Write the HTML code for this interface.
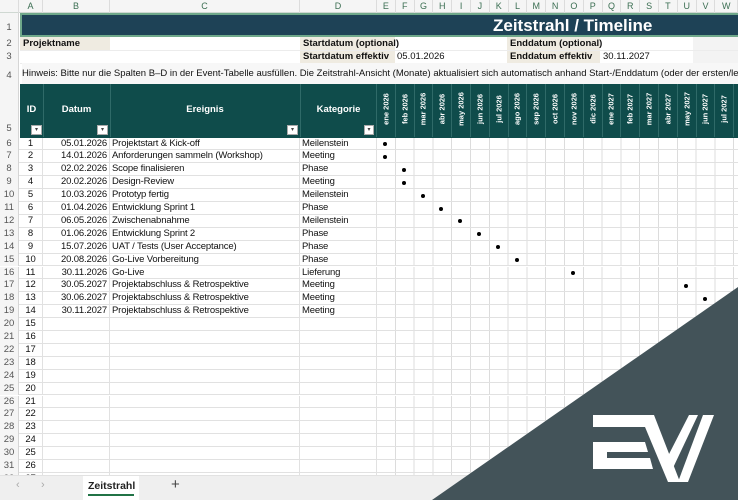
<!DOCTYPE html>
<html><head><meta charset="utf-8"><style>
*{margin:0;padding:0;box-sizing:border-box}
body{width:738px;height:500px;overflow:hidden;background:#fff;font-family:"Liberation Sans",sans-serif;position:relative;color:#111}
.a{position:absolute;white-space:nowrap}
.colh{top:0;height:13px;background:#f5f5f5;border-bottom:1px solid #cfd8d2;left:0;width:738px}
.cl{position:absolute;top:0;height:13px;font-size:9px;color:#3b6e52;text-align:center;line-height:13px;border-right:1px solid #dcdcdc}
.rn{position:absolute;left:0;width:19px;font-size:9.5px;color:#555;text-align:center;background:#f5f5f5;border-right:1px solid #d5d5d5}
.row{position:absolute;left:19px;width:719px;height:12.9px;border-bottom:1px solid #e1e1e1;font-size:9.5px;line-height:12.9px;letter-spacing:-0.15px;
background:repeating-linear-gradient(90deg,transparent 0,transparent 17.8px,#dcdcdc 17.8px,#dcdcdc 18.8px) 358px 0/100% 100% no-repeat;}
.c{position:absolute;top:0;height:100%;border-right:1px solid #e1e1e1;overflow:hidden}
.cA{left:0;width:24px;text-align:center}
.cB{left:24px;width:67px;text-align:right;padding-right:2px}
.cC{left:91px;width:190px;padding-left:2px}
.cD{left:281px;width:77px;padding-left:2px}
.dot{position:absolute;top:4.5px;width:4px;height:4px;border-radius:50%;background:#000}
.mh{position:absolute;top:84px;height:53px;width:18.8px;border-right:1px solid #2f6a68}
.mh span{position:absolute;left:50%;top:25px;transform:translate(-50%,-50%) rotate(-90deg);color:#fff;font-size:7.5px;font-weight:bold;white-space:nowrap}
.fb{position:absolute;top:125px;width:11px;height:10px;background:#fff;border:1px solid #aaa;font-size:6px;line-height:8px;text-align:center;color:#444}
.lab{background:#efebe1;font-weight:bold;font-size:9.5px;padding-left:3px;height:13px;line-height:13px}
</style></head><body>
<div class="a colh"></div>
<div class="cl" style="left:0;width:19px"></div>
<div class="cl" style="left:19px;width:24px">A</div>
<div class="cl" style="left:43px;width:67px">B</div>
<div class="cl" style="left:110px;width:190px">C</div>
<div class="cl" style="left:300px;width:77px">D</div>
<div class="cl" style="left:377px;width:18.8px">E</div><div class="cl" style="left:395.8px;width:18.8px">F</div><div class="cl" style="left:414.6px;width:18.8px">G</div><div class="cl" style="left:433.4px;width:18.8px">H</div><div class="cl" style="left:452.2px;width:18.8px">I</div><div class="cl" style="left:471px;width:18.8px">J</div><div class="cl" style="left:489.8px;width:18.8px">K</div><div class="cl" style="left:508.6px;width:18.8px">L</div><div class="cl" style="left:527.4px;width:18.8px">M</div><div class="cl" style="left:546.2px;width:18.8px">N</div><div class="cl" style="left:565px;width:18.8px">O</div><div class="cl" style="left:583.8px;width:18.8px">P</div><div class="cl" style="left:602.6px;width:18.8px">Q</div><div class="cl" style="left:621.4px;width:18.8px">R</div><div class="cl" style="left:640.2px;width:18.8px">S</div><div class="cl" style="left:659px;width:18.8px">T</div><div class="cl" style="left:677.8px;width:18.8px">U</div><div class="cl" style="left:696.6px;width:18.8px">V</div><div class="cl" style="left:715.4px;width:22.6px">W</div>

<div class="rn" style="top:13px;height:24px;line-height:30px">1</div>
<div class="rn" style="top:37px;height:13px;line-height:13px">2</div>
<div class="rn" style="top:50px;height:13px;line-height:13px">3</div>
<div class="rn" style="top:63px;height:21px;line-height:26px">4</div>
<div class="rn" style="top:84px;height:53.5px;line-height:90px">5</div>

<div class="a" style="left:20px;top:13px;width:718px;height:24px;background:#1e4256;border:2px solid #6fa88a;border-right:none"></div>
<div class="a" style="left:493px;top:13px;height:24px;line-height:25px;color:#fff;font-weight:bold;font-size:17px">Zeitstrahl / Timeline</div>

<div class="a lab" style="left:20px;top:37px;width:90px">Projektname</div>
<div class="a lab" style="left:300px;top:37px;width:95px">Startdatum (optional)</div>
<div class="a lab" style="left:507px;top:37px;width:93px">Enddatum (optional)</div>
<div class="a lab" style="left:300px;top:50px;width:95px">Startdatum effektiv</div>
<div class="a lab" style="left:507px;top:50px;width:93px">Enddatum effektiv</div>
<div class="a" style="left:397px;top:50px;font-size:9.5px;line-height:13px">05.01.2026</div>
<div class="a" style="left:603px;top:50px;font-size:9.5px;line-height:13px">30.11.2027</div>
<div class="a" style="left:693px;top:37px;width:45px;height:26px;background:#f3f3f3"></div>
<div class="a" style="left:20px;top:49.5px;width:718px;border-top:1px solid #ececec"></div>
<div class="a" style="left:20px;top:62.5px;width:718px;border-top:1px solid #ececec"></div>

<div class="a" style="left:22px;top:63px;height:21px;line-height:21px;font-size:9.5px;background:#f7f7f7;width:716px">Hinweis: Bitte nur die Spalten B–D in der Event-Tabelle ausfüllen. Die Zeitstrahl-Ansicht (Monate) aktualisiert sich automatisch anhand Start-/Enddatum (oder der ersten/letzten</div>

<div class="a" style="left:20px;top:84px;width:718px;height:53.5px;background:#0f4c4b"></div>
<div class="a" style="left:43px;top:84px;height:53px;border-left:1px solid #2f6a68"></div>
<div class="a" style="left:110px;top:84px;height:53px;border-left:1px solid #2f6a68"></div>
<div class="a" style="left:300px;top:84px;height:53px;border-left:1px solid #2f6a68"></div>
<div class="a" style="left:376px;top:84px;height:53px;border-left:1px solid #2f6a68"></div>
<div class="a" style="left:20px;top:104px;width:23px;text-align:center;color:#fff;font-weight:bold;font-size:9.5px">ID</div>
<div class="a" style="left:43px;top:104px;width:67px;text-align:center;color:#fff;font-weight:bold;font-size:9.5px">Datum</div>
<div class="a" style="left:110px;top:104px;width:190px;text-align:center;color:#fff;font-weight:bold;font-size:9.5px">Ereignis</div>
<div class="a" style="left:300px;top:104px;width:77px;text-align:center;color:#fff;font-weight:bold;font-size:9.5px">Kategorie</div>
<div class="fb" style="left:31px">▾</div><div class="fb" style="left:97px">▾</div><div class="fb" style="left:287px">▾</div><div class="fb" style="left:364px;width:10px">▾</div>
<div class="mh" style="left:377px"><span>ene 2026</span></div><div class="mh" style="left:395.8px"><span>feb 2026</span></div><div class="mh" style="left:414.6px"><span>mar 2026</span></div><div class="mh" style="left:433.4px"><span>abr 2026</span></div><div class="mh" style="left:452.2px"><span>may 2026</span></div><div class="mh" style="left:471px"><span>jun 2026</span></div><div class="mh" style="left:489.8px"><span>jul 2026</span></div><div class="mh" style="left:508.6px"><span>ago 2026</span></div><div class="mh" style="left:527.4px"><span>sep 2026</span></div><div class="mh" style="left:546.2px"><span>oct 2026</span></div><div class="mh" style="left:565px"><span>nov 2026</span></div><div class="mh" style="left:583.8px"><span>dic 2026</span></div><div class="mh" style="left:602.6px"><span>ene 2027</span></div><div class="mh" style="left:621.4px"><span>feb 2027</span></div><div class="mh" style="left:640.2px"><span>mar 2027</span></div><div class="mh" style="left:659px"><span>abr 2027</span></div><div class="mh" style="left:677.8px"><span>may 2027</span></div><div class="mh" style="left:696.6px"><span>jun 2027</span></div><div class="mh" style="left:715.4px"><span>jul 2027</span></div>

<div class="rn" style="top:137.5px;height:12.9px;line-height:12.9px">6</div><div class="row" style="top:137.5px"><div class="c cA">1</div><div class="c cB">05.01.2026</div><div class="c cC">Projektstart &amp; Kick-off</div><div class="c cD">Meilenstein</div><div class="dot" style="left:364px"></div></div>
<div class="rn" style="top:150.4px;height:12.9px;line-height:12.9px">7</div><div class="row" style="top:150.4px"><div class="c cA">2</div><div class="c cB">14.01.2026</div><div class="c cC">Anforderungen sammeln (Workshop)</div><div class="c cD">Meeting</div><div class="dot" style="left:364px"></div></div>
<div class="rn" style="top:163.3px;height:12.9px;line-height:12.9px">8</div><div class="row" style="top:163.3px"><div class="c cA">3</div><div class="c cB">02.02.2026</div><div class="c cC">Scope finalisieren</div><div class="c cD">Phase</div><div class="dot" style="left:382.8px"></div></div>
<div class="rn" style="top:176.2px;height:12.9px;line-height:12.9px">9</div><div class="row" style="top:176.2px"><div class="c cA">4</div><div class="c cB">20.02.2026</div><div class="c cC">Design-Review</div><div class="c cD">Meeting</div><div class="dot" style="left:382.8px"></div></div>
<div class="rn" style="top:189.1px;height:12.9px;line-height:12.9px">10</div><div class="row" style="top:189.1px"><div class="c cA">5</div><div class="c cB">10.03.2026</div><div class="c cC">Prototyp fertig</div><div class="c cD">Meilenstein</div><div class="dot" style="left:401.6px"></div></div>
<div class="rn" style="top:202px;height:12.9px;line-height:12.9px">11</div><div class="row" style="top:202px"><div class="c cA">6</div><div class="c cB">01.04.2026</div><div class="c cC">Entwicklung Sprint 1</div><div class="c cD">Phase</div><div class="dot" style="left:420.4px"></div></div>
<div class="rn" style="top:214.9px;height:12.9px;line-height:12.9px">12</div><div class="row" style="top:214.9px"><div class="c cA">7</div><div class="c cB">06.05.2026</div><div class="c cC">Zwischenabnahme</div><div class="c cD">Meilenstein</div><div class="dot" style="left:439.2px"></div></div>
<div class="rn" style="top:227.8px;height:12.9px;line-height:12.9px">13</div><div class="row" style="top:227.8px"><div class="c cA">8</div><div class="c cB">01.06.2026</div><div class="c cC">Entwicklung Sprint 2</div><div class="c cD">Phase</div><div class="dot" style="left:458px"></div></div>
<div class="rn" style="top:240.7px;height:12.9px;line-height:12.9px">14</div><div class="row" style="top:240.7px"><div class="c cA">9</div><div class="c cB">15.07.2026</div><div class="c cC">UAT / Tests (User Acceptance)</div><div class="c cD">Phase</div><div class="dot" style="left:476.8px"></div></div>
<div class="rn" style="top:253.6px;height:12.9px;line-height:12.9px">15</div><div class="row" style="top:253.6px"><div class="c cA">10</div><div class="c cB">20.08.2026</div><div class="c cC">Go-Live Vorbereitung</div><div class="c cD">Phase</div><div class="dot" style="left:495.6px"></div></div>
<div class="rn" style="top:266.5px;height:12.9px;line-height:12.9px">16</div><div class="row" style="top:266.5px"><div class="c cA">11</div><div class="c cB">30.11.2026</div><div class="c cC">Go-Live</div><div class="c cD">Lieferung</div><div class="dot" style="left:552px"></div></div>
<div class="rn" style="top:279.4px;height:12.9px;line-height:12.9px">17</div><div class="row" style="top:279.4px"><div class="c cA">12</div><div class="c cB">30.05.2027</div><div class="c cC">Projektabschluss &amp; Retrospektive</div><div class="c cD">Meeting</div><div class="dot" style="left:664.8px"></div></div>
<div class="rn" style="top:292.3px;height:12.9px;line-height:12.9px">18</div><div class="row" style="top:292.3px"><div class="c cA">13</div><div class="c cB">30.06.2027</div><div class="c cC">Projektabschluss &amp; Retrospektive</div><div class="c cD">Meeting</div><div class="dot" style="left:683.6px"></div></div>
<div class="rn" style="top:305.2px;height:12.9px;line-height:12.9px">19</div><div class="row" style="top:305.2px"><div class="c cA">14</div><div class="c cB">30.11.2027</div><div class="c cC">Projektabschluss &amp; Retrospektive</div><div class="c cD">Meeting</div></div>
<div class="rn" style="top:318.1px;height:12.9px;line-height:12.9px">20</div><div class="row" style="top:318.1px"><div class="c cA">15</div><div class="c cB"></div><div class="c cC"></div><div class="c cD"></div></div>
<div class="rn" style="top:331px;height:12.9px;line-height:12.9px">21</div><div class="row" style="top:331px"><div class="c cA">16</div><div class="c cB"></div><div class="c cC"></div><div class="c cD"></div></div>
<div class="rn" style="top:343.9px;height:12.9px;line-height:12.9px">22</div><div class="row" style="top:343.9px"><div class="c cA">17</div><div class="c cB"></div><div class="c cC"></div><div class="c cD"></div></div>
<div class="rn" style="top:356.8px;height:12.9px;line-height:12.9px">23</div><div class="row" style="top:356.8px"><div class="c cA">18</div><div class="c cB"></div><div class="c cC"></div><div class="c cD"></div></div>
<div class="rn" style="top:369.7px;height:12.9px;line-height:12.9px">24</div><div class="row" style="top:369.7px"><div class="c cA">19</div><div class="c cB"></div><div class="c cC"></div><div class="c cD"></div></div>
<div class="rn" style="top:382.6px;height:12.9px;line-height:12.9px">25</div><div class="row" style="top:382.6px"><div class="c cA">20</div><div class="c cB"></div><div class="c cC"></div><div class="c cD"></div></div>
<div class="rn" style="top:395.5px;height:12.9px;line-height:12.9px">26</div><div class="row" style="top:395.5px"><div class="c cA">21</div><div class="c cB"></div><div class="c cC"></div><div class="c cD"></div></div>
<div class="rn" style="top:408.4px;height:12.9px;line-height:12.9px">27</div><div class="row" style="top:408.4px"><div class="c cA">22</div><div class="c cB"></div><div class="c cC"></div><div class="c cD"></div></div>
<div class="rn" style="top:421.3px;height:12.9px;line-height:12.9px">28</div><div class="row" style="top:421.3px"><div class="c cA">23</div><div class="c cB"></div><div class="c cC"></div><div class="c cD"></div></div>
<div class="rn" style="top:434.2px;height:12.9px;line-height:12.9px">29</div><div class="row" style="top:434.2px"><div class="c cA">24</div><div class="c cB"></div><div class="c cC"></div><div class="c cD"></div></div>
<div class="rn" style="top:447.1px;height:12.9px;line-height:12.9px">30</div><div class="row" style="top:447.1px"><div class="c cA">25</div><div class="c cB"></div><div class="c cC"></div><div class="c cD"></div></div>
<div class="rn" style="top:460px;height:12.9px;line-height:12.9px">31</div><div class="row" style="top:460px"><div class="c cA">26</div><div class="c cB"></div><div class="c cC"></div><div class="c cD"></div></div>
<div class="rn" style="top:472.9px;height:12.9px;line-height:12.9px">32</div><div class="row" style="top:472.9px"><div class="c cA">27</div><div class="c cB"></div><div class="c cC"></div><div class="c cD"></div></div>

<div class="a" style="left:0;top:475px;width:738px;height:25px;background:#efefef;border-top:1px solid #e2e2e2"></div>
<div class="a" style="left:16px;top:479px;font-size:11px;color:#aaa">‹</div>
<div class="a" style="left:41px;top:479px;font-size:11px;color:#aaa">›</div>
<div class="a" style="left:83px;top:476px;width:56px;height:24px;background:#fff"></div>
<div class="a" style="left:88px;top:480px;font-size:10.5px;font-weight:bold;color:#222">Zeitstrahl</div>
<div class="a" style="left:88px;top:494px;width:46px;height:2px;background:#217346"></div>
<div class="a" style="left:171px;top:476px;font-size:15px;color:#444">+</div>

<svg class="a" style="left:0;top:0" width="738" height="500" viewBox="0 0 738 500">
<polygon points="738,287 738,500 432,500" fill="#435359"/>
<g fill="#fff">
<polygon points="593,415 651,415 655,427 593,427"/>
<polygon points="593,442 645,442 648,452 607,452 607,458 650,458 653,469 593,469"/>
<polygon points="640,415 654,415 680,482 668,482"/>
<polygon points="689,415 698,415 672,470 667,458"/>
<polygon points="703,415 714,415 688,482 678,482"/>
</g>
</svg>
</body></html>
